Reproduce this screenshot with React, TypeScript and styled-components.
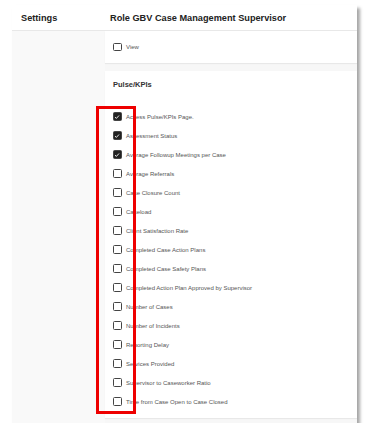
import styled, { createGlobalStyle } from 'styled-components';

const GlobalStyle = createGlobalStyle`
  html, body {
    margin: 0;
    padding: 0;
    background: #ffffff;
    font-family: 'Liberation Sans', Arial, sans-serif;
  }
`;

const Page = styled.div`
  padding: 5px 12px 0 12px;
`;

const Frame = styled.div`
  position: relative;
  width: 345px;
  height: 418px;
  display: flex;
  flex-direction: column;
  background: #f7f7f7;
  box-shadow: 3px 3px 3px rgba(0, 0, 0, 0.35);
`;

const Header = styled.header`
  display: grid;
  grid-template-columns: 93px 1fr;
  align-items: center;
  height: 26px;
  box-sizing: border-box;
  background: #ffffff;
  border-bottom: 1px solid #e8e8e8;
`;

type TitleProps = {
  indent: number;
};

const Title = styled.h1<TitleProps>`
  margin: 0;
  padding-left: ${(props) => props.indent}px;
  font-size: 9.2px;
  font-weight: 700;
  color: #222;
  white-space: nowrap;
`;

const Body = styled.div`
  flex: 1;
  display: grid;
  grid-template-columns: 93px 1fr;
`;

const Sidebar = styled.aside`
  background: #f9f9f9;
`;

const Main = styled.main`
  display: flex;
  flex-direction: column;
  gap: 8px;
`;

const Card = styled.section`
  background: #ffffff;
  padding: 9px 8px 7px;
  box-shadow: 0 1px 1px rgba(0, 0, 0, 0.06);
`;

const ViewCard = styled(Card)`
  height: 32px;
  box-sizing: border-box;
  padding: 0 8px;
  display: flex;
  align-items: center;
`;

const SectionTitle = styled.h2`
  margin: 0 0 17px;
  font-size: 7.5px;
  line-height: 10px;
  font-weight: 700;
  color: #333;
`;

const List = styled.ul`
  margin: 0;
  padding: 0;
  list-style: none;
`;

const Item = styled.li`
  display: flex;
  align-items: center;
  height: 19px;
`;

type BoxProps = {
  checked?: boolean;
};

const Box = styled.span<BoxProps>`
  width: 8.5px;
  height: 8.5px;
  box-sizing: border-box;
  border: 1.3px solid #444;
  border-radius: 1.5px;
  background: ${(props) => (props.checked ? '#222' : '#fff')};
  display: flex;
  align-items: center;
  justify-content: center;
  flex-shrink: 0;
`;

const Label = styled.span`
  margin-left: 4.5px;
  font-size: 6px;
  color: #555;
  white-space: nowrap;
`;

const Highlight = styled.div`
  position: absolute;
  left: 84px;
  top: 101px;
  width: 40px;
  height: 308px;
  box-sizing: border-box;
  border: 3px solid #ee0000;
  pointer-events: none;
`;

const Checkbox = ({ checked, label }: { checked?: boolean; label: string }) => (
  <>
    <Box checked={checked}>
      {checked && (
        <svg width="6" height="6" viewBox="0 0 6 6">
          <path d="M1 3.1 L2.4 4.4 L5 1.5" fill="none" stroke="#fff" strokeWidth="0.9" />
        </svg>
      )}
    </Box>
    <Label>{label}</Label>
  </>
);

const kpis = [
  { label: 'Access Pulse/KPIs Page.', checked: true },
  { label: 'Assessment Status', checked: true },
  { label: 'Average Followup Meetings per Case', checked: true },
  { label: 'Average Referrals' },
  { label: 'Case Closure Count' },
  { label: 'Caseload' },
  { label: 'Client Satisfaction Rate' },
  { label: 'Completed Case Action Plans' },
  { label: 'Completed Case Safety Plans' },
  { label: 'Completed Action Plan Approved by Supervisor' },
  { label: 'Number of Cases' },
  { label: 'Number of Incidents' },
  { label: 'Reporting Delay' },
  { label: 'Services Provided' },
  { label: 'Supervisor to Caseworker Ratio' },
  { label: 'Time from Case Open to Case Closed' },
];

export default function App() {
  return (
    <Page>
      <GlobalStyle />
      <Frame>
        <Header>
          <Title indent={9}>Settings</Title>
          <Title indent={5}>Role GBV Case Management Supervisor</Title>
        </Header>
        <Body>
          <Sidebar />
          <Main>
            <ViewCard>
              <Checkbox label="View" />
            </ViewCard>
            <Card>
              <SectionTitle>Pulse/KPIs</SectionTitle>
              <List>
                {kpis.map((item) => (
                  <Item key={item.label}>
                    <Checkbox checked={item.checked} label={item.label} />
                  </Item>
                ))}
              </List>
            </Card>
          </Main>
        </Body>
        <Highlight />
      </Frame>
    </Page>
  );
}
